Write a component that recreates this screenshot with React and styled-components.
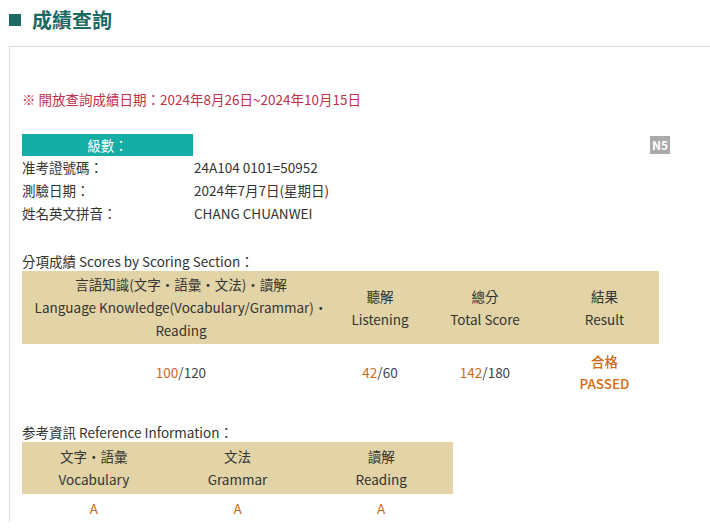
import React from 'react';
import styled, { createGlobalStyle } from 'styled-components';

const Global = createGlobalStyle`
  body { margin: 0; background: #fff; font-family: "Noto Sans CJK TC", "Noto Sans", sans-serif; color: #333; }
`;

const Page = styled.div`
  width: 710px;
  height: 528px;
  overflow: hidden;
`;

const Title = styled.h1`
  margin: 0;
  padding: 6px 0 0 9px;
  height: 46px;
  box-sizing: border-box;
  display: flex;
  align-items: flex-start;
  gap: 11px;
  font-size: 20px;
  line-height: 28px;
  font-weight: bold;
  color: #1d6a63;
  &::before {
    content: '';
    width: 12px;
    height: 12px;
    margin-top: 8px;
    background: #1d6a63;
  }
`;

const Panel = styled.div`
  margin-left: 9px;
  border-top: 1px solid #ddd;
  border-left: 1px solid #ddd;
  padding: 42px 0 0 12px;
  font-size: 13.5px;
`;

const Notice = styled.div`
  color: #c0304a;
  line-height: 20px;
`;

const LevelRow = styled.div`
  display: flex;
  align-items: center;
  margin-top: 25px;
  width: 648px;
  justify-content: space-between;
`;

const LevelBar = styled.div`
  width: 171px;
  height: 22px;
  background: #16ada6;
  color: #fff;
  text-align: center;
  line-height: 22px;
`;

const Badge = styled.span`
  background: #aaa;
  color: #fff;
  font-weight: bold;
  font-size: 12px;
  padding: 1px 2px;
  line-height: 16px;
`;

const InfoRow = styled.div`
  display: grid;
  grid-template-columns: 172px 1fr;
  line-height: 23px;
`;

const SectionLabel = styled.div`
  margin-top: ${p => p.$top}px;
  line-height: 20px;
`;

const Table = styled.div`
  display: grid;
  grid-template-columns: ${p => p.$cols};
  width: ${p => p.$width}px;
  text-align: center;
  line-height: 23px;
`;

const Head = styled.div`
  background: #e2d4a6;
  display: flex;
  flex-direction: column;
  justify-content: center;
  height: ${p => p.$h}px;
`;

const Cell = styled.div`
  display: flex;
  flex-direction: column;
  justify-content: center;
  height: ${p => p.$h}px;
  color: #444;
`;

const Score = styled.span`
  color: #d06b14;
`;

const Result = styled.div`
  color: #d06b14;
  line-height: 22px;
  font-weight: 500;
`;

export default function App() {
  return (
    <Page>
      <Global />
      <Title>成績查詢</Title>
      <Panel>
        <Notice>※ 開放查詢成績日期：2024年8月26日~2024年10月15日</Notice>
        <LevelRow>
          <LevelBar>級數：</LevelBar>
          <Badge>N5</Badge>
        </LevelRow>
        <InfoRow><span>准考證號碼：</span><span>24A104 0101=50952</span></InfoRow>
        <InfoRow><span>測驗日期：</span><span>2024年7月7日(星期日)</span></InfoRow>
        <InfoRow><span>姓名英文拼音：</span><span>CHANG CHUANWEI</span></InfoRow>

        <SectionLabel $top={26}>分項成績 Scores by Scoring Section：</SectionLabel>
        <Table $width={637} $cols="318px 80px 130px 109px">
          <Head $h={73}><div>言語知識(文字‧語彙‧文法)‧讀解</div><div>Language Knowledge(Vocabulary/Grammar)‧</div><div>Reading</div></Head>
          <Head $h={73}><div>聽解</div><div>Listening</div></Head>
          <Head $h={73}><div>總分</div><div>Total Score</div></Head>
          <Head $h={73}><div>結果</div><div>Result</div></Head>
          <Cell $h={56}><div><Score>100</Score>/120</div></Cell>
          <Cell $h={56}><div><Score>42</Score>/60</div></Cell>
          <Cell $h={56}><div><Score>142</Score>/180</div></Cell>
          <Cell $h={56}><Result>合格</Result><Result>PASSED</Result></Cell>
        </Table>

        <SectionLabel $top={22}>参考資訊 Reference Information：</SectionLabel>
        <Table $width={431} $cols="1fr 1fr 1fr">
          <Head $h={52}><div>文字‧語彙</div><div>Vocabulary</div></Head>
          <Head $h={52}><div>文法</div><div>Grammar</div></Head>
          <Head $h={52}><div>讀解</div><div>Reading</div></Head>
          <Cell $h={28}><Score>A</Score></Cell>
          <Cell $h={28}><Score>A</Score></Cell>
          <Cell $h={28}><Score>A</Score></Cell>
        </Table>
      </Panel>
    </Page>
  );
}
